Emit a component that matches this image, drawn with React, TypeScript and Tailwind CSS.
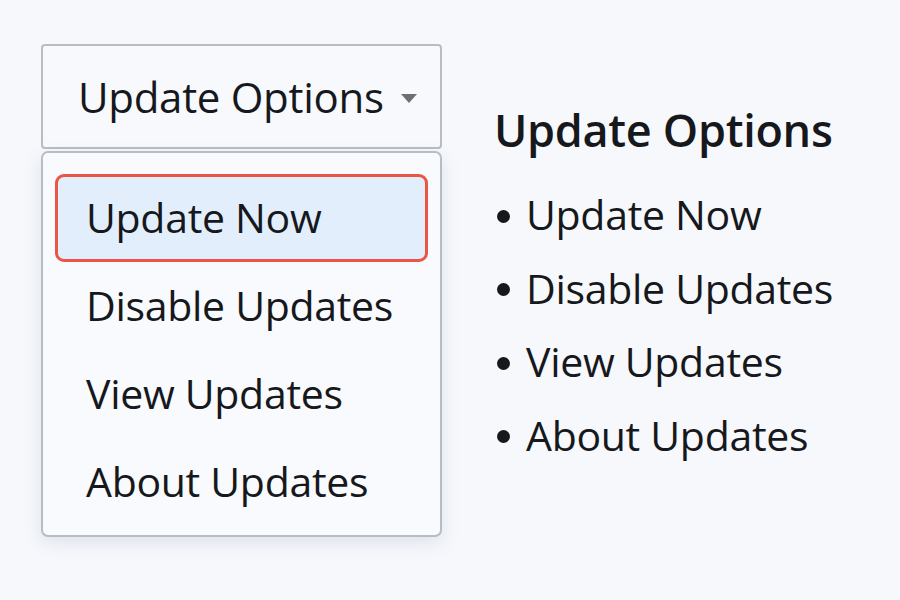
const items = ["Update Now", "Disable Updates", "View Updates", "About Updates"];

export default function App() {
  return (
    <div
      className="w-[900px] h-[600px] bg-[#f6f8fc] text-[#16181c] flex items-start pl-[41px] pt-[44px]"
      style={{ fontFamily: '"Open Sans", "Noto Sans", sans-serif' }}
    >
      {/* dropdown */}
      <div className="w-[401px] flex flex-col">
        <button className="h-[105px] bg-[#f8f9fc] border-2 border-[#b8bdc5] rounded-[4px] flex items-center pl-[35px] text-[42px] tracking-[-0.3px]">
          <span>Update Options</span>
          <svg width="16" height="9" viewBox="0 0 16 9" className="ml-[17px] mt-[4px]">
            <path d="M0 0h16L8 9z" fill="#6c6f76" />
          </svg>
        </button>
        <div className="mt-[2px] h-[386px] bg-[#f9fafd] border-2 border-[#b8bdc5] rounded-[7px] shadow-[0_6px_18px_rgba(120,135,160,0.18)] px-[12px] pt-[21px] flex flex-col">
          {items.map((t, i) => (
            <div
              key={t}
              className={
                i === 0
                  ? "h-[88px] bg-[#e3eefc] border-[3px] border-[#ea5544] rounded-[9px] flex items-center pl-[28px] text-[41px] tracking-[-0.3px]"
                  : "h-[88px] flex items-center pl-[31px] text-[41px] tracking-[-0.3px]"
              }
            >
              {t}
            </div>
          ))}
        </div>
      </div>

      {/* summary */}
      <div className="ml-[52px] mt-[56px]">
        <h2 className="text-[45px] font-semibold tracking-[-0.3px] leading-[60px]">Update Options</h2>
        <ul className="mt-[18px] flex flex-col">
          {items.map((t) => (
            <li key={t} className="h-[73.5px] flex items-center text-[41px] tracking-[-0.3px]">
              <span className="w-[13px] h-[13px] rounded-full bg-[#16181c] ml-[3px] mr-[16px] mt-[3px]" />
              {t}
            </li>
          ))}
        </ul>
      </div>
    </div>
  );
}
